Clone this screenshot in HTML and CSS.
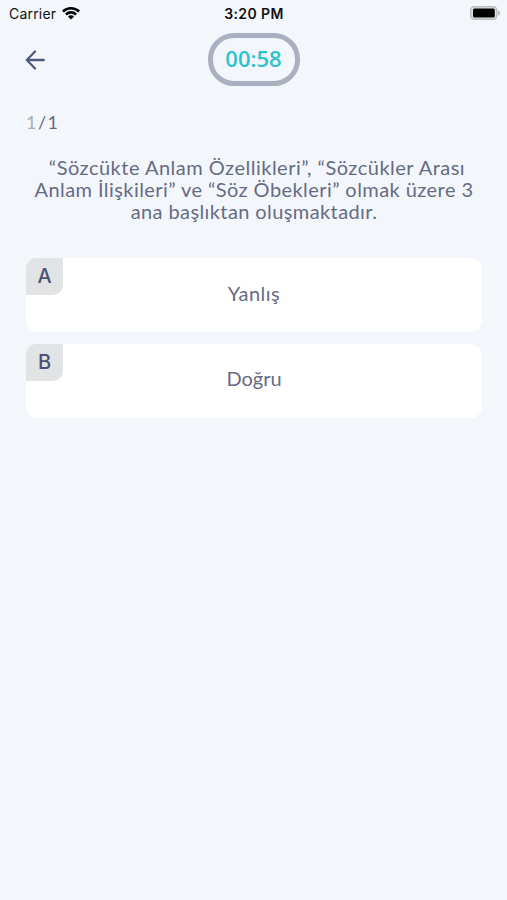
FILE: index.html
```html
<!DOCTYPE html>
<html lang="tr">
<head>
    <meta charset="UTF-8">
    <meta name="viewport" content="width=device-width, initial-scale=1.0">
    <title>Test</title>
    <link rel="stylesheet" href="styles.css">
</head>
<body>
    <div class="status-bar">
        <div class="carrier">
            <span>Carrier</span>
            <svg class="wifi" width="18" height="14" viewBox="0 0 18 14">
                <path d="M0 4.6a12.8 12.8 0 0 1 18 0L16.2 6.4a10.2 10.2 0 0 0-14.4 0z"/>
                <path d="M3 7.6a8.5 8.5 0 0 1 12 0L13.2 9.4a6 6 0 0 0-8.4 0z"/>
                <path d="M5.9 10.6a4.4 4.4 0 0 1 6.2 0L9 13.6z"/>
            </svg>
        </div>
        <div class="clock">3:20 PM</div>
        <svg class="battery" width="31" height="14" viewBox="0 0 31 14">
            <rect x="0.75" y="0.75" width="26" height="12.5" rx="3.5" fill="#e0e2e4" stroke="#b9bbbd" stroke-width="1.5"/>
            <rect x="3" y="2.6" width="21.8" height="8.8" rx="1.5" fill="#000"/>
            <path d="M28.2 4.5c2.6 1 2.6 4 0 5z" fill="#b0b2b4"/>
        </svg>
    </div>

    <header class="header">
        <a class="back">
            <svg width="20" height="20" viewBox="0 0 20 20" fill="none" stroke="#505a7c" stroke-width="2.3" stroke-linecap="round" stroke-linejoin="round">
                <path d="M18.8 10H1.8M10 1.5L1.8 10l8.2 8.5"/>
            </svg>
        </a>
        <div class="timer">00:58</div>
    </header>

    <main class="quiz">
        <div class="counter"><span class="current">1</span> / 1</div>
        <p class="question"><span class="line-1">“Sözcükte Anlam Özellikleri”, “Sözcükler Arası</span><br><span class="line-2">Anlam İlişkileri” ve “Söz Öbekleri” olmak üzere 3</span><br><span class="line-3">ana başlıktan oluşmaktadır.</span></p>

        <div class="answers">
            <div class="answer">
                <div class="letter">A</div>
                <span class="yanlis">Yanlış</span>
            </div>
            <div class="answer">
                <div class="letter">B</div>
                <span>Doğru</span>
            </div>
        </div>
    </main>
</body>
</html>
```
FILE: styles.css
```css
* {
    box-sizing: border-box;
}
body {
    margin: 0;
    min-height: 900px;
    background: #f3f7fb;
    color: #666b84;
    font-family: Lato, sans-serif;
}
.status-bar {
    display: grid;
    grid-template-columns: 1fr auto 1fr;
    align-items: center;
    height: 26px;
    padding: 0 6px 0 9px;
    color: #111;
    font-family: Inter, sans-serif;
    font-size: 14px;
}
.carrier {
    display: flex;
    align-items: center;
    gap: 6px;
    letter-spacing: 0.2px;
}
.clock {
    margin-right: 2px;
    font-weight: 600;
    letter-spacing: 0.4px;
}
.battery {
    justify-self: end;
}
.header {
    display: grid;
    grid-template-columns: 1fr 92px 1fr;
    align-items: center;
    height: 53px;
    margin-top: 7px;
    padding: 0 25px;
}
.back {
    display: flex;
}
.timer {
    height: 53px;
    border: 5px solid #abb0c0;
    border-radius: 26px;
    color: #2dc3cd;
    font-family: "Open Sans", sans-serif;
    font-size: 22px;
    font-weight: 600;
    line-height: 41px;
    text-align: center;
}
.quiz {
    padding: 25px 25px 0 26px;
}
.counter {
    font-size: 18px;
    line-height: 22px;
    word-spacing: -2.5px;
    letter-spacing: -0.3px;
}
.current {
    color: #a9adb8;
}
.question {
    margin: 23px 0 0;
    font-size: 20px;
    line-height: 22px;
    text-align: center;
    white-space: nowrap;
}
.line-1 {
    padding-left: 6px;
    letter-spacing: 0.5px;
}
.line-2 {
    letter-spacing: 0.44px;
}
.line-3 {
    letter-spacing: 0.4px;
}
.answers {
    display: grid;
    gap: 12px;
    margin-top: 36px;
}
.answer {
    position: relative;
    display: flex;
    align-items: center;
    justify-content: center;
    height: 74px;
    padding-bottom: 5px;
    border-radius: 12px;
    background: #fff;
    font-size: 20px;
}
.answer:last-child {
    padding-bottom: 7px;
}
.yanlis {
    letter-spacing: 0.5px;
}
.letter {
    position: absolute;
    top: 0;
    left: 0;
    width: 37px;
    height: 37px;
    border-radius: 10px 0;
    background: #e2e3e4;
    color: #4a5274;
    font-family: Inter, sans-serif;
    font-size: 20px;
    font-weight: 500;
    line-height: 37px;
    text-align: center;
}
```
